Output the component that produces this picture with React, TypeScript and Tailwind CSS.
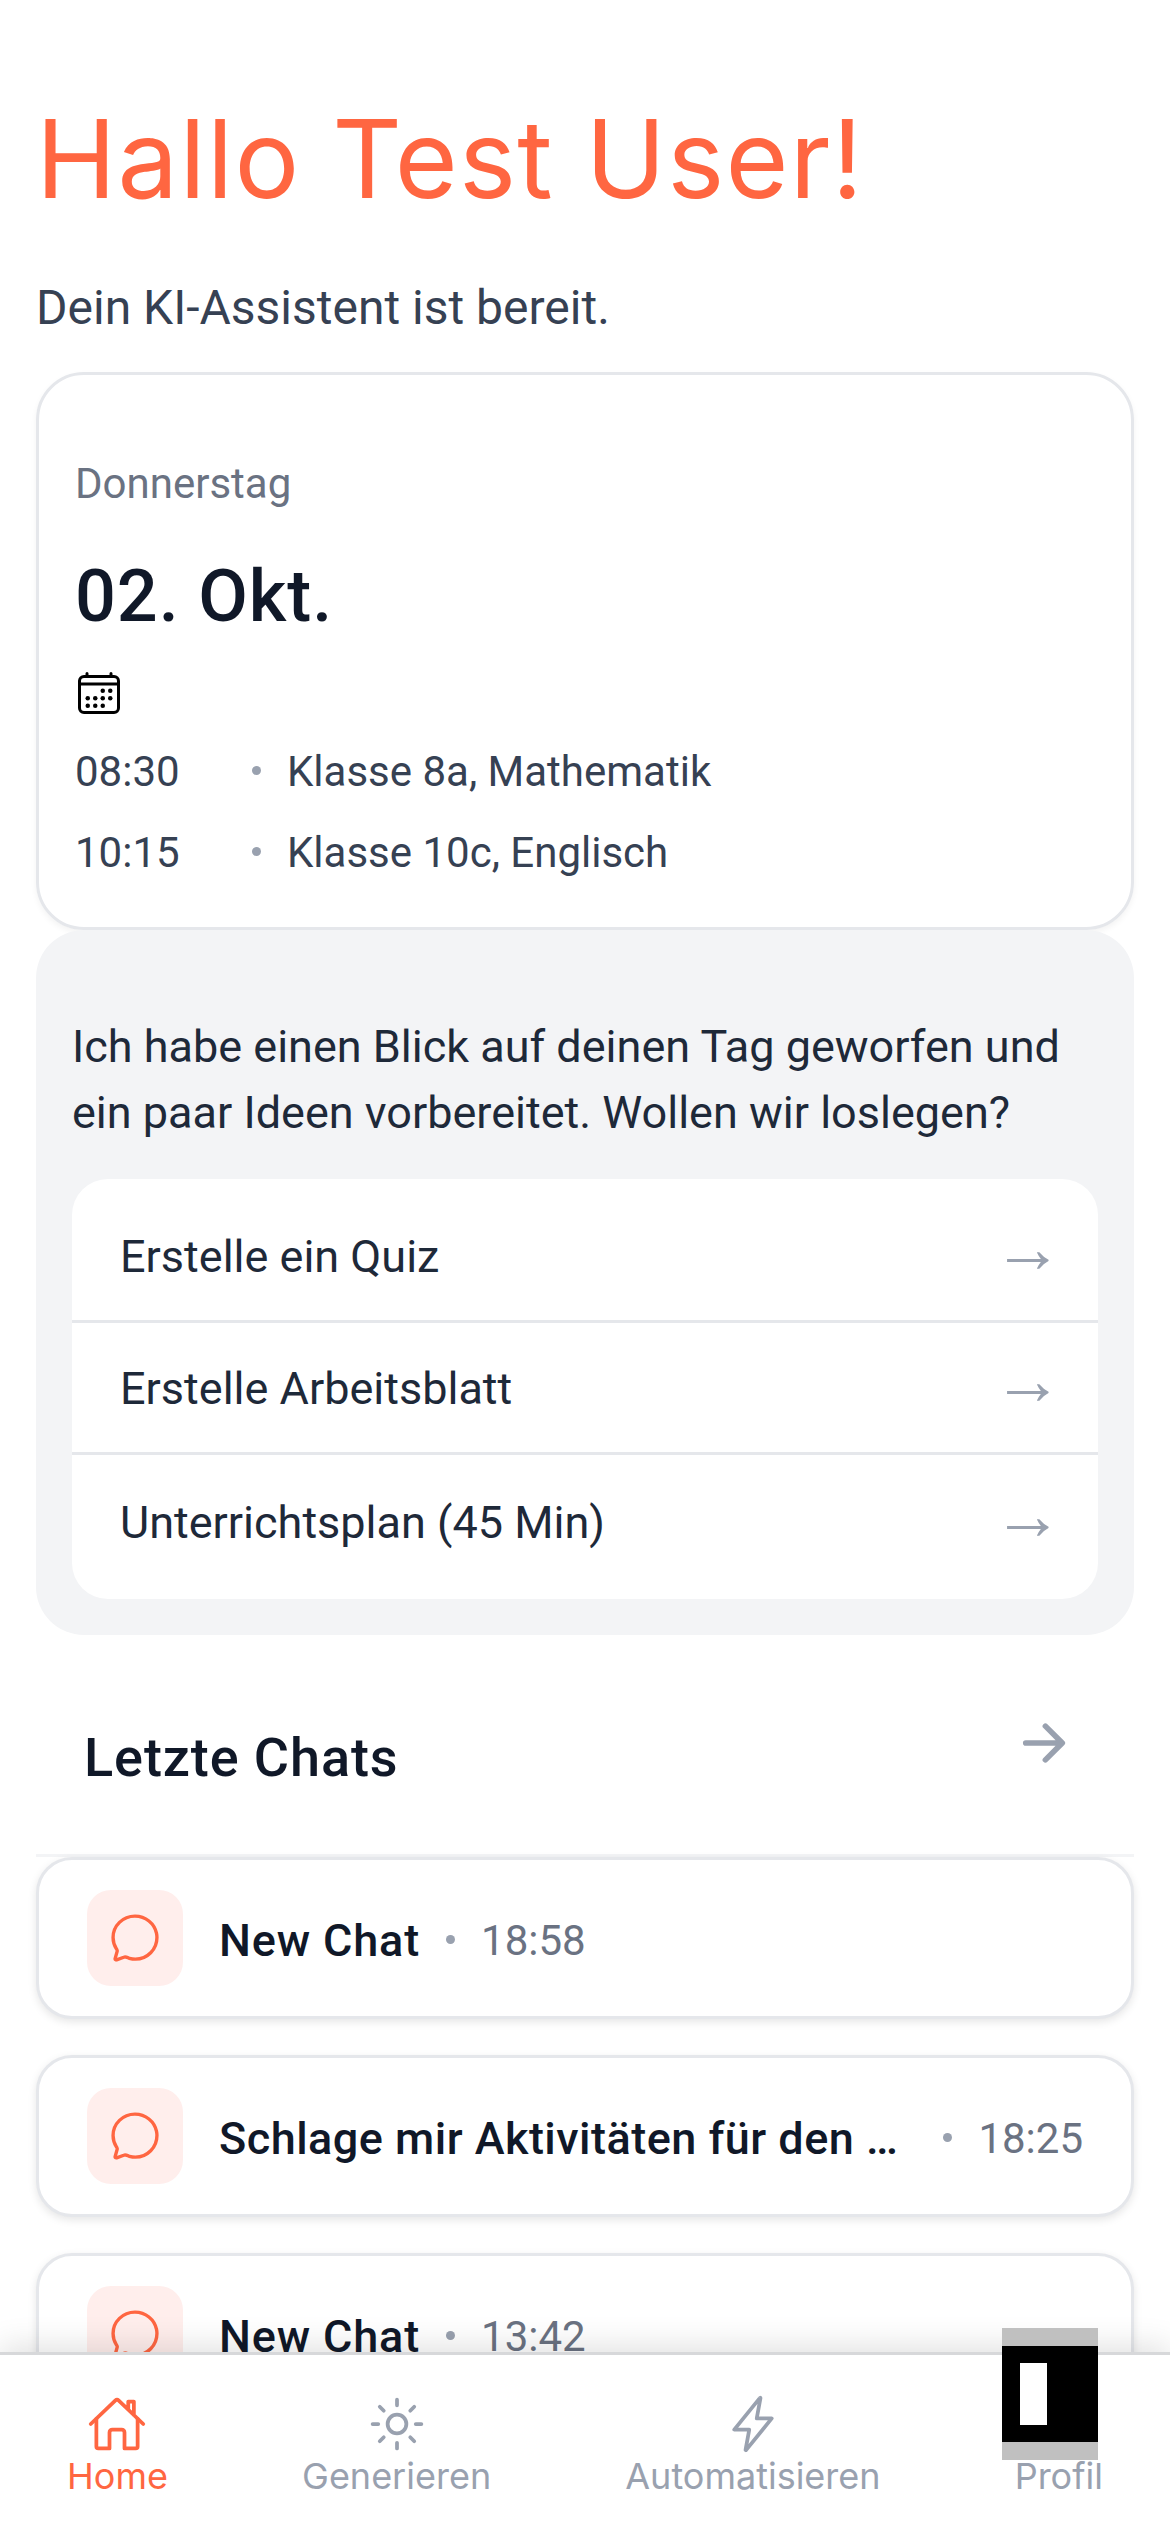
import {
  IoArrowForward,
  IoCalendarOutline,
  IoChatbubbleOutline,
  IoFlashOutline,
  IoHomeOutline,
  IoSunnyOutline,
} from "react-icons/io5";

const lessons = [
  { time: "08:30", title: "Klasse 8a, Mathematik" },
  { time: "10:15", title: "Klasse 10c, Englisch" },
];

const chats = [
  { title: "New Chat", time: "18:58", tracking: "tracking-[0.85px]" },
  { title: "Schlage mir Aktivitäten für den Unterricht vor", time: "18:25", tracking: "tracking-[0.47px]" },
  { title: "New Chat", time: "13:42", tracking: "tracking-[0.85px]" },
];

function Dot({ className }: { className: string }) {
  return <span className={`size-[9px] shrink-0 rounded-full bg-gray-400 ${className}`} />;
}

function Suggestion({ label, className }: { label: string; className: string }) {
  return (
    <div className={`flex items-center justify-between pr-[35px] pl-12 ${className}`}>
      <span className="text-[45px] leading-[66px] text-gray-800">{label}</span>
      <span className="mb-[15px] font-['Liberation_Serif',serif] text-[70px] leading-[66px] text-gray-400">→</span>
    </div>
  );
}

function ChatCard({ title, time, tracking }: { title: string; time: string; tracking: string }) {
  return (
    <div className="flex h-[162px] shrink-0 items-center rounded-[36px] border-[3px] border-gray-200 bg-white px-12 shadow-[0_3px_9px_rgba(0,0,0,0.1)]">
      <div className="flex size-24 shrink-0 items-center justify-center rounded-3xl bg-[#ffeeec]">
        <IoChatbubbleOutline className="size-[54px] text-[#ff6641]" />
      </div>
      <span className={`mt-[5px] ml-9 truncate text-[45px] leading-[66px] font-medium text-gray-900 ${tracking}`}>
        {title}
      </span>
      <span className="mt-[5px] ml-[26px] flex shrink-0 items-center gap-[26px]">
        <Dot className="mb-[3px]" />
        <span className="text-[42px] leading-[60px] text-gray-500">{time}</span>
      </span>
    </div>
  );
}

export default function App() {
  return (
    <div className="flex h-[2532px] w-[1170px] flex-col overflow-hidden bg-white font-[Roboto,sans-serif]">
      <main className="flex min-h-0 flex-1 flex-col overflow-hidden px-9">
        <h1 className="mt-[94px] font-[Inter,sans-serif] text-[108px] leading-[130px] tracking-[1.3px] text-[#ff6641]">
          Hallo Test User!
        </h1>
        <p className="mt-12 text-[48px] leading-[72px] text-gray-700">Dein KI-Assistent ist bereit.</p>

        <section className="mt-7 flex h-[558px] shrink-0 flex-col rounded-[48px] border-[3px] border-gray-200 px-9 shadow-[0_3px_6px_rgba(0,0,0,0.05)]">
          <p className="mt-[79px] text-[42px] leading-[60px] text-gray-500">Donnerstag</p>
          <p className="mt-[38px] text-[72px] leading-[90px] font-medium tracking-[0.9px] text-gray-900">02. Okt.</p>
          <IoCalendarOutline className="mt-[27px] size-12 text-black" />
          <ul className="mt-[25px] flex flex-col gap-[21px]">
            {lessons.map((l) => (
              <li key={l.time} className="flex items-center text-[42px] leading-[60px] text-gray-700">
                <span className="w-[177px]">{l.time}</span>
                <Dot className="mb-[3px]" />
                <span className="ml-[26px]">{l.title}</span>
              </li>
            ))}
          </ul>
        </section>

        <section className="relative flex h-[705px] shrink-0 flex-col rounded-[48px] bg-gray-100 px-9">
          <p className="mt-[84px] text-[45px] leading-[66px] text-gray-800">
            Ich habe einen Blick auf deinen Tag geworfen und ein paar Ideen vorbereitet. Wollen wir loslegen?
          </p>
          <div className="mt-[33px] flex flex-col overflow-hidden rounded-[36px] bg-white">
            <Suggestion label="Erstelle ein Quiz" className="h-36 border-b-[3px] border-gray-200 pt-3.5" />
            <Suggestion label="Erstelle Arbeitsblatt" className="h-33 border-b-[3px] border-gray-200 pt-0.5" />
            <Suggestion label="Unterrichtsplan (45 Min)" className="h-36 pb-2" />
          </div>
        </section>

        <header className="flex h-[222px] shrink-0 items-start justify-between border-b-[3px] border-gray-100 pr-[60px] pl-12">
          <h2 className="mt-[85px] text-[54px] leading-[76px] font-medium tracking-[0.9px] text-gray-900">
            Letzte Chats
          </h2>
          <IoArrowForward className="mt-[78px] size-[60px] text-gray-400" />
        </header>

        <div className="flex flex-col gap-9">
          {chats.map((c) => (
            <ChatCard key={c.time} title={c.title} time={c.time} tracking={c.tracking} />
          ))}
        </div>
      </main>

      <nav className="relative flex h-[180px] shrink-0 items-start justify-around border-t-[3px] border-[#d7d8da] bg-white pt-[39px] font-[Inter,sans-serif] text-4xl text-gray-400 shadow-[0_-6px_30px_rgba(0,0,0,0.12)]">
        <div className="flex flex-col items-center text-[#ff6641]">
          <IoHomeOutline className="size-[60px]" />
          <span className="leading-[44px]">Home</span>
        </div>
        <div className="flex flex-col items-center">
          <IoSunnyOutline className="size-[60px]" />
          <span className="leading-[44px]">Generieren</span>
        </div>
        <div className="flex flex-col items-center">
          <IoFlashOutline className="size-[60px]" />
          <span className="leading-[44px]">Automatisieren</span>
        </div>
        <div className="flex flex-col items-center pt-[60px]">
          <span className="leading-[44px]">Profil</span>
        </div>
        <div className="absolute -top-[27px] right-[72px] h-[132px] w-24 bg-[#c0c0c0] py-[18px]">
          <div className="h-24 bg-black pt-[17px] pl-[18px]">
            <div className="h-[62px] w-[27px] bg-white" />
          </div>
        </div>
      </nav>
    </div>
  );
}
